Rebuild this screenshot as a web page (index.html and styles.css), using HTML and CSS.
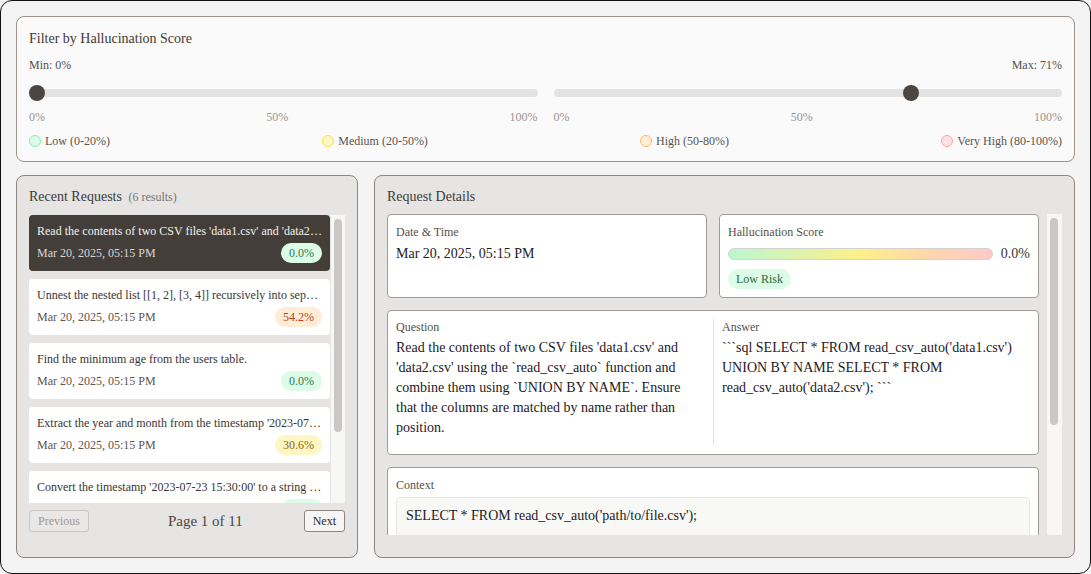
FILE: index.html
```html
<!DOCTYPE html>
<html>
<head>
<meta charset="utf-8">
<link rel="stylesheet" href="styles.css">
</head>
<body>
<div class="app">
  <section class="filter">
    <h2 class="title">Filter by Hallucination Score</h2>
    <div class="sliders">
      <div class="slider-col">
        <div class="val-label">Min: 0%</div>
        <div class="track"><span class="thumb" style="left:calc(0% - 0px)"></span></div>
        <div class="scale"><span>0%</span><span>50%</span><span>100%</span></div>
      </div>
      <div class="slider-col">
        <div class="val-label right">Max: 71%</div>
        <div class="track"><span class="thumb" style="left:calc(71% - 11.4px)"></span></div>
        <div class="scale"><span>0%</span><span>50%</span><span>100%</span></div>
      </div>
    </div>
    <div class="legend">
      <span class="leg"><i class="dot low"></i>Low (0-20%)</span>
      <span class="leg"><i class="dot med"></i>Medium (20-50%)</span>
      <span class="leg"><i class="dot high"></i>High (50-80%)</span>
      <span class="leg"><i class="dot vhigh"></i>Very High (80-100%)</span>
    </div>
  </section>

  <div class="main">
    <section class="panel left">
      <h2 class="title">Recent Requests <span class="count">(6 results)</span></h2>
      <div class="scroll-wrap list-wrap">
        <div class="list">
          <div class="item selected">
            <div class="q">Read the contents of two CSV files 'data1.csv' and 'data2.csv' using the `read_csv_auto` function</div>
            <div class="meta"><span class="date">Mar 20, 2025, 05:15 PM</span><span class="badge green">0.0%</span></div>
          </div>
          <div class="item">
            <div class="q">Unnest the nested list [[1, 2], [3, 4]] recursively into separate rows</div>
            <div class="meta"><span class="date">Mar 20, 2025, 05:15 PM</span><span class="badge orange">54.2%</span></div>
          </div>
          <div class="item">
            <div class="q">Find the minimum age from the users table.</div>
            <div class="meta"><span class="date">Mar 20, 2025, 05:15 PM</span><span class="badge green">0.0%</span></div>
          </div>
          <div class="item">
            <div class="q">Extract the year and month from the timestamp '2023-07-23 15:30:00'</div>
            <div class="meta"><span class="date">Mar 20, 2025, 05:15 PM</span><span class="badge yellow">30.6%</span></div>
          </div>
          <div class="item">
            <div class="q">Convert the timestamp '2023-07-23 15:30:00' to a string with the format</div>
            <div class="meta"><span class="date">Mar 20, 2025, 05:15 PM</span><span class="badge green">0.0%</span></div>
          </div>
          <div class="item">
            <div class="q">List all tables in the current database.</div>
            <div class="meta"><span class="date">Mar 20, 2025, 05:15 PM</span><span class="badge green">0.0%</span></div>
          </div>
        </div>
        <div class="sbar"><div class="sthumb list-thumb"></div></div>
      </div>
      <div class="pager">
        <button class="btn" disabled>Previous</button>
        <span class="page">Page 1 of 11</span>
        <button class="btn">Next</button>
      </div>
    </section>

    <section class="panel right">
      <h2 class="title">Request Details</h2>
      <div class="scroll-wrap details-wrap">
        <div class="details">
          <div class="row2">
            <div class="card">
              <div class="label">Date &amp; Time</div>
              <div class="value">Mar 20, 2025, 05:15 PM</div>
            </div>
            <div class="card">
              <div class="label">Hallucination Score</div>
              <div class="score-row">
                <div class="score-bar"></div>
                <span class="score-val">0.0%</span>
              </div>
              <span class="risk">Low Risk</span>
            </div>
          </div>
          <div class="card qa">
            <div class="qcol">
              <div class="label">Question</div>
              <div class="text">Read the contents of two CSV files 'data1.csv' and 'data2.csv' using the `read_csv_auto` function and combine them using `UNION BY NAME`. Ensure that the columns are matched by name rather than position.</div>
            </div>
            <div class="acol">
              <div class="label">Answer</div>
              <div class="text">```sql SELECT * FROM read_csv_auto('data1.csv') UNION BY NAME SELECT * FROM read_csv_auto('data2.csv'); ```</div>
            </div>
          </div>
          <div class="card">
            <div class="label">Context</div>
            <div class="code">SELECT * FROM read_csv_auto('path/to/file.csv');</div>
          </div>
        </div>
        <div class="sbar"><div class="sthumb details-thumb"></div></div>
      </div>
    </section>
  </div>
</div>
</body>
</html>
```

FILE: styles.css
```css
* { box-sizing: border-box; }
html, body { margin: 0; padding: 0; }
body {
  font-family: "Liberation Serif", "Times New Roman", serif;
  color: #3f3a36;
  background: #f4f4f4;
}
.app {
  width: 1091px;
  height: 574px;
  border: 1px solid #111;
  border-radius: 12px;
  background: #f4f4f4;
  padding: 15px;
  display: flex;
  flex-direction: column;
  gap: 13px;
}
.title {
  margin: 0;
  font-size: 14px;
  font-weight: normal;
  line-height: 18px;
  color: #3f3a36;
}
.count { font-size: 12px; color: #7a7470; margin-left: 3px; }

/* filter */
.filter {
  background: #fafafa;
  border: 1px solid #9a928b;
  border-radius: 8px;
  padding: 13px 12px 11px;
  height: 146px;
}
.sliders {
  display: grid;
  grid-template-columns: 1fr 1fr;
  gap: 16px;
  margin-top: 9px;
}
.val-label { font-size: 12px; line-height: 16px; color: #55504c; }
.val-label.right { text-align: right; }
.track {
  position: relative;
  height: 8px;
  border-radius: 4px;
  background: #e4e3e1;
  margin: 16px 0 0;
}
.thumb {
  position: absolute;
  top: -4px;
  width: 16px;
  height: 16px;
  border-radius: 50%;
  background: #4b4641;
}
.scale {
  display: flex;
  justify-content: space-between;
  font-size: 12px;
  line-height: 16px;
  color: #9a9591;
  margin-top: 12px;
}
.legend {
  display: flex;
  justify-content: space-between;
  margin-top: 8px;
  font-size: 12px;
  line-height: 16px;
  color: #5a5550;
}
.leg { display: flex; align-items: center; gap: 4px; }
.dot {
  display: inline-block;
  width: 12px;
  height: 12px;
  border-radius: 50%;
  border: 1px solid;
}
.dot.low { background: #dcfce7; border-color: #86efac; }
.dot.med { background: #fef9c3; border-color: #fde047; }
.dot.high { background: #ffedd5; border-color: #fdba74; }
.dot.vhigh { background: #fee2e2; border-color: #fca5a5; }

/* main */
.main {
  display: grid;
  grid-template-columns: 342px 1fr;
  gap: 16px;
  height: 383px;
}
.panel {
  background: #e6e5e3;
  border: 1px solid #8e8680;
  border-radius: 8px;
  padding: 12px 12px;
  display: flex;
  flex-direction: column;
  min-height: 0;
}

.scroll-wrap { display: flex; min-height: 0; }
.sbar {
  flex: none;
  background: #f7f7f6;
  padding: 4px 3px 0 3px;
}
.sthumb {
  width: 8px;
  background: #c9c8c7;
  border-radius: 4px;
}

.list-wrap { margin-top: 9px; height: 288px; }
.list {
  width: 301px;
  overflow: hidden;
  display: flex;
  flex-direction: column;
  gap: 8px;
}
.list-wrap .sbar { width: 14px; margin-left: 1px; }
.list-thumb { height: 213px; }

.item {
  flex: none;
  background: #fff;
  border-radius: 4px;
  padding: 8px;
  height: 56px;
}
.item .q {
  font-size: 12px;
  line-height: 16px;
  color: #3a3532;
  white-space: nowrap;
  overflow: hidden;
  text-overflow: ellipsis;
}
.meta {
  display: flex;
  justify-content: space-between;
  align-items: center;
  margin-top: 4px;
  height: 20px;
}
.date { font-size: 12px; color: #5a5551; }
.item.selected { background: #433e3a; }
.item.selected .q { color: #f3f0ec; }
.item.selected .date { color: #dcd6d0; }
.badge {
  font-size: 12px;
  line-height: 20px;
  height: 20px;
  padding: 0 8px;
  border-radius: 10px;
}
.badge.green { background: #dcfce7; color: #2f7d4f; }
.badge.orange { background: #ffedd5; color: #b8461a; }
.badge.yellow { background: #fef7c3; color: #93660c; }

.pager {
  display: flex;
  align-items: center;
  justify-content: space-between;
  margin-top: 7px;
}
.btn {
  font-family: "Liberation Serif", "Times New Roman", serif;
  font-size: 12px;
  height: 22px;
  padding: 0 8px;
  border-radius: 3px;
  border: 1px solid #8e8680;
  background: #f6f6f5;
  color: #2a2623;
}
.btn:disabled {
  border-color: #c9c6c3;
  background: #e9e8e6;
  color: #9c9793;
}
.page { font-size: 15px; color: #4a4541; margin-left: 18px; }

/* details */
.details-wrap { margin-top: 8px; height: 321px; gap: 8px; }
.details {
  width: 652px;
  overflow: hidden;
  display: flex;
  flex-direction: column;
  gap: 12px;
}
.details-wrap .sbar { width: 15px; }
.details-thumb { height: 207px; }

.row2 {
  display: grid;
  grid-template-columns: 1fr 1fr;
  gap: 12px;
  flex: none;
}
.card {
  flex: none;
  background: #fff;
  border: 1px solid #a29b95;
  border-radius: 4px;
  padding: 9px 8px 8px;
}
.label { font-size: 12px; line-height: 16px; color: #55504c; }
.value { font-size: 14px; line-height: 20px; color: #24201d; margin-top: 4px; }
.score-row {
  display: flex;
  align-items: center;
  gap: 8px;
  margin-top: 4px;
  height: 20px;
}
.score-bar {
  flex: 1;
  height: 12px;
  border-radius: 6px;
  border: 1px solid #d4d2d0;
  background: linear-gradient(to right, #bbf7d0 0%, #fef08a 50%, #fed7aa 75%, #fecaca 100%);
}
.score-val { font-size: 14px; color: #3a3532; }
.risk {
  display: inline-block;
  margin-top: 5px;
  font-size: 12px;
  line-height: 20px;
  padding: 0 8px;
  border-radius: 10px;
  background: #dcfce7;
  color: #2a6a43;
}
.qa {
  display: grid;
  grid-template-columns: 1fr 1fr;
  padding: 8px;
}
.qcol { padding: 0 16px 8px 0; }
.acol { padding: 0 0 8px 8px; border-left: 1px solid #e2e0de; }
.text { font-size: 14px; line-height: 20px; color: #24201d; margin-top: 3px; }
.code {
  margin-top: 4px;
  background: #f8f8f7;
  border: 1px solid #e8e6e4;
  border-radius: 4px;
  padding: 8px 9px;
  min-height: 200px;
  font-size: 14px;
  line-height: 20px;
  color: #24201d;
}
```
